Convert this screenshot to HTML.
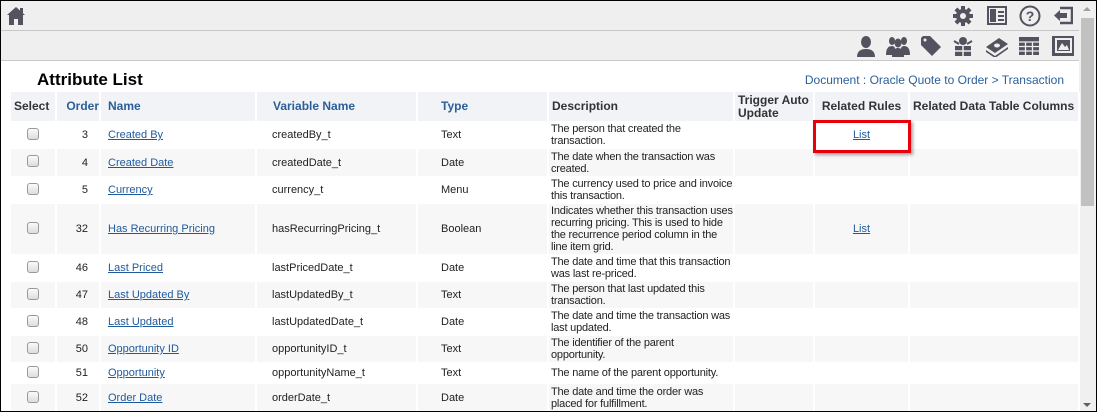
<!DOCTYPE html>
<html><head><style>
*{margin:0;padding:0;box-sizing:border-box}
body{width:1097px;height:412px;overflow:hidden;background:#fff;font-family:"Liberation Sans",Arial,sans-serif;position:relative}
#frame{position:absolute;left:0;top:0;width:1097px;height:412px;border:1px solid #000;z-index:10;pointer-events:none}
.bar1{position:absolute;left:0;top:0;width:1079px;height:31px;background:#efefef;border-bottom:1px solid #c8c8c8}
.bar2{position:absolute;left:0;top:31px;width:1079px;height:30px;background:#efefef;border-bottom:1px solid #c8c8c8}
.ic{position:absolute}
.sb{position:absolute;left:1079px;top:0;width:18px;height:412px;background:#f0f0f0}
.thumb{position:absolute;left:1081px;top:18px;width:13px;height:188px;background:#c1c1c1}
h1{position:absolute;left:37px;top:70px;font-size:17px;font-weight:bold;color:#000}
.crumb{position:absolute;right:33px;top:73px;font-size:12px;color:#2a5f9a}
table{position:absolute;left:11px;top:92px;border-collapse:collapse;table-layout:fixed;width:1068px;font-size:11px;color:#222}
th{background:#f1f3f6;font-size:12px;font-weight:bold;text-align:left;height:29px;border-right:2px solid #fff;color:#333;line-height:13px;padding:0 3px}
th.b{color:#2a5f9a}
td{border-right:2px solid #fff;padding:0 3px;line-height:12px;vertical-align:middle}
td:nth-child(3),th:nth-child(3){padding-left:7px}
td:nth-child(4){padding-left:15px}th:nth-child(4){padding-left:16px}
td:nth-child(5){padding-left:23px}th:nth-child(5){padding-left:23px}
td:nth-child(6){padding-left:2px;padding-right:0;letter-spacing:-0.2px;white-space:nowrap;overflow:hidden}
tr.g td{background:#f7f7f7}
a{color:#1f5a9c;text-decoration:underline}
.cb{display:inline-block;width:12px;height:12px;border:1px solid #999;border-radius:3px;background:linear-gradient(#fafafa,#dcdcdc)}
.c{text-align:center}.r{text-align:right;padding-right:11px}
</style></head><body>
<div class="bar1"></div><div class="bar2"></div>
<svg class="ic" style="left:6px;top:6px" width="20" height="20" viewBox="0 0 20 20"><path d="M10 1 L1 9 L3 9 L3 19 L8 19 L8 13 L12 13 L12 19 L17 19 L17 9 L19 9 Z" fill="#54525e"/><rect x="14" y="2" width="3" height="5" fill="#54525e"/></svg>
<svg class="ic" style="left:953px;top:6px" width="20" height="20" viewBox="0 0 20 20"><g fill="#54525e"><circle cx="10" cy="10" r="7"/><rect x="8" y="0" width="4" height="20"/><rect x="0" y="8" width="20" height="4"/><rect x="8" y="0" width="4" height="20" transform="rotate(45 10 10)"/><rect x="8" y="0" width="4" height="20" transform="rotate(-45 10 10)"/></g><circle cx="10" cy="10" r="3" fill="#efefef"/></svg>
<svg class="ic" style="left:987px;top:6px" width="20" height="19" viewBox="0 0 20 19"><rect x="0" y="0" width="20" height="19" fill="#54525e"/><rect x="2" y="2" width="16" height="15" fill="#efefef"/><rect x="3" y="3" width="6" height="13" fill="#54525e"/><rect x="11" y="5" width="6" height="2" fill="#54525e"/><rect x="11" y="9" width="6" height="2" fill="#54525e"/><rect x="11" y="13" width="6" height="2" fill="#54525e"/></svg>
<svg class="ic" style="left:1019px;top:5px" width="22" height="22" viewBox="0 0 22 22"><circle cx="11" cy="11" r="9.5" fill="none" stroke="#54525e" stroke-width="2"/><text x="11" y="16" font-size="14" font-weight="bold" text-anchor="middle" fill="#54525e" font-family="Liberation Sans">?</text></svg>
<svg class="ic" style="left:1053px;top:6px" width="20" height="19" viewBox="0 0 20 19"><path d="M7 2 H19 V17 H7" fill="none" stroke="#54525e" stroke-width="2.5"/><path d="M1 9.5 L7 4 V7 H14 V12 H7 V15 Z" fill="#54525e"/></svg>
<svg class="ic" style="left:856px;top:35px" width="20" height="22" viewBox="0 0 20 22"><ellipse cx="10" cy="7" rx="5" ry="6" fill="#54525e"/><path d="M1 22 Q1 14 10 14 Q19 14 19 22Z" fill="#54525e"/></svg>
<svg class="ic" style="left:886px;top:35px" width="24" height="22" viewBox="0 0 24 22"><g fill="#54525e"><ellipse cx="6" cy="6" rx="3" ry="4"/><ellipse cx="18" cy="6" rx="3" ry="4"/><ellipse cx="12" cy="8" rx="3.5" ry="4.5"/><path d="M0 20Q0 11 6 11Q9 11 9 14 L9 20Z"/><path d="M24 20Q24 11 18 11Q15 11 15 14 L15 20Z"/><path d="M6 22Q6 13 12 13Q18 13 18 22Z"/></g></svg>
<svg class="ic" style="left:920px;top:35px" width="22" height="22" viewBox="0 0 22 22"><path d="M1 3 L3 1 L10 1 L21 12 L12 21 L1 10Z" fill="#54525e"/><circle cx="5" cy="5" r="1.5" fill="#efefef"/></svg>
<svg class="ic" style="left:953px;top:35px" width="20" height="22" viewBox="0 0 20 22"><g fill="#54525e"><circle cx="10" cy="6" r="4"/><rect x="2" y="11" width="16" height="10"/><path d="M1 6 L6 9 M19 6 L14 9" stroke="#54525e" stroke-width="2"/></g><path d="M10 11 V21 M2 16 H18" stroke="#efefef" stroke-width="1.5"/></svg>
<svg class="ic" style="left:985px;top:35px" width="24" height="22" viewBox="0 0 24 22"><g fill="#54525e"><path d="M1 12 L14 3 L23 9 L10 18Z"/><path d="M1 15 L10 21 L23 12 L23 14 L10 23 L1 17Z"/></g><ellipse cx="12" cy="10.5" rx="3" ry="2" fill="#efefef"/></svg>
<svg class="ic" style="left:1019px;top:37px" width="20" height="18" viewBox="0 0 20 18"><rect width="20" height="18" fill="#54525e"/><path d="M0 5H20M0 9.5H20M0 14H20M6.5 5V18M13.5 5V18" stroke="#efefef" stroke-width="1.3"/></svg>
<svg class="ic" style="left:1052px;top:36px" width="22" height="20" viewBox="0 0 22 20"><rect x="0" y="0" width="22" height="20" fill="#54525e"/><rect x="3" y="2" width="17" height="15" fill="#efefef"/><rect x="5" y="4" width="13" height="11" fill="#54525e"/><path d="M6 14 L10 7 L13 11 L15 9 L17 14Z" fill="#efefef"/></svg>
<div class="sb"></div><div class="thumb"></div>
<div style="position:absolute;left:1083px;top:7px;width:0;height:0;border:4px solid transparent;border-bottom:4px solid #a0a0a0;border-top:0"></div>
<div style="position:absolute;left:1083px;top:403px;width:0;height:0;border:4px solid transparent;border-top:4px solid #606060;border-bottom:0"></div>
<h1>Attribute List</h1>
<div class="crumb">Document : Oracle Quote to Order &gt; Transaction</div>
<table>
<colgroup><col style="width:45px"><col style="width:44px"><col style="width:156px"><col style="width:161px"><col style="width:131px"><col style="width:186px"><col style="width:80px"><col style="width:95px"><col style="width:170px"></colgroup>
<tr><th>Select</th><th class="b" style="text-align:right;padding-right:0">Order</th><th class="b">Name</th><th class="b">Variable Name</th><th class="b">Type</th><th>Description</th><th>Trigger Auto Update</th><th style="text-align:center">Related Rules</th><th>Related Data Table Columns</th></tr>
<tr style="height:28px"><td class="c"><span class="cb"></span></td><td class="r">3</td><td><a>Created By</a></td><td>createdBy_t</td><td>Text</td><td>The person that created the<br>transaction.</td><td></td><td class="c"><a>List</a></td><td></td></tr>
<tr class="g" style="height:27px"><td class="c"><span class="cb"></span></td><td class="r">4</td><td><a>Created Date</a></td><td>createdDate_t</td><td>Date</td><td>The date when the transaction was<br>created.</td><td></td><td></td><td></td></tr>
<tr style="height:28px"><td class="c"><span class="cb"></span></td><td class="r">5</td><td><a>Currency</a></td><td>currency_t</td><td>Menu</td><td>The currency used to price and invoice<br>this transaction.</td><td></td><td></td><td></td></tr>
<tr class="g" style="height:50px"><td class="c"><span class="cb"></span></td><td class="r">32</td><td><a>Has Recurring Pricing</a></td><td>hasRecurringPricing_t</td><td>Boolean</td><td>Indicates whether this transaction uses<br>recurring pricing. This is used to hide<br>the recurrence period column in the<br>line item grid.</td><td></td><td class="c"><a>List</a></td><td></td></tr>
<tr style="height:28px"><td class="c"><span class="cb"></span></td><td class="r">46</td><td><a>Last Priced</a></td><td>lastPricedDate_t</td><td>Date</td><td>The date and time that this transaction<br>was last re-priced.</td><td></td><td></td><td></td></tr>
<tr class="g" style="height:26px"><td class="c"><span class="cb"></span></td><td class="r">47</td><td><a>Last Updated By</a></td><td>lastUpdatedBy_t</td><td>Text</td><td>The person that last updated this<br>transaction.</td><td></td><td></td><td></td></tr>
<tr style="height:28px"><td class="c"><span class="cb"></span></td><td class="r">48</td><td><a>Last Updated</a></td><td>lastUpdatedDate_t</td><td>Date</td><td>The date and time the transaction was<br>last updated.</td><td></td><td></td><td></td></tr>
<tr class="g" style="height:26px"><td class="c"><span class="cb"></span></td><td class="r">50</td><td><a>Opportunity ID</a></td><td>opportunityID_t</td><td>Text</td><td>The identifier of the parent<br>opportunity.</td><td></td><td></td><td></td></tr>
<tr style="height:22px"><td class="c"><span class="cb"></span></td><td class="r">51</td><td><a>Opportunity</a></td><td>opportunityName_t</td><td>Text</td><td>The name of the parent opportunity.</td><td></td><td></td><td></td></tr>
<tr class="g" style="height:28px"><td class="c"><span class="cb"></span></td><td class="r">52</td><td><a>Order Date</a></td><td>orderDate_t</td><td>Date</td><td>The date and time the order was<br>placed for fulfillment.</td><td></td><td></td><td></td></tr>
</table>
<div style="position:absolute;left:813px;top:120px;width:98px;height:33px;border:3px solid #e8000b;box-shadow:2px 2px 3px rgba(0,0,0,.35)"></div>
<div id="frame"></div>
</body></html>
